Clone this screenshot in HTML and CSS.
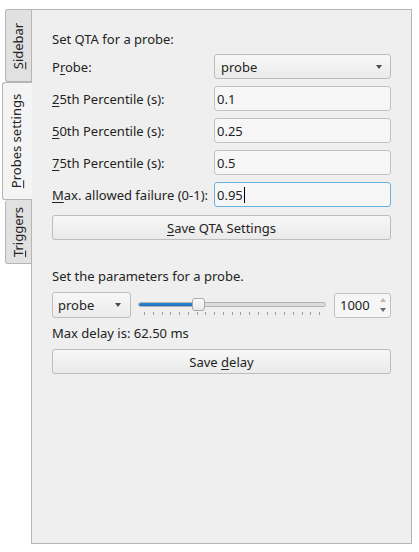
FILE: index.html
```html
<!DOCTYPE html>
<html>
<head>
<meta charset="utf-8">
<link rel="stylesheet" href="styles.css">
</head>
<body>
<div class="window">
  <div class="tabbar">
    <div class="tab tab-sidebar"><span class="tab-label"><u>S</u>idebar</span></div>
    <div class="tab tab-selected"><span class="tab-label"><u>P</u>robes settings</span></div>
    <div class="tab tab-triggers"><span class="tab-label"><u>T</u>riggers</span></div>
  </div>
  <div class="panel">
    <div class="title">Set QTA for a probe:</div>
    <div class="form">
      <label class="label">P<u>r</u>obe:</label>
      <div class="combo"><span>probe</span><span class="arrow"></span></div>
      <label class="label"><u>2</u>5th Percentile (s):</label>
      <div class="edit">0.1</div>
      <label class="label"><u>5</u>0th Percentile (s):</label>
      <div class="edit">0.25</div>
      <label class="label"><u>7</u>5th Percentile (s):</label>
      <div class="edit">0.5</div>
      <label class="label"><u>M</u>ax. allowed failure (0-1):</label>
      <div class="edit focused">0.95<span class="caret"></span></div>
    </div>
    <div class="button btn-qta"><span><u>S</u>ave QTA Settings</span></div>

    <div class="title title-2">Set the parameters for a probe.</div>
    <div class="param-row">
      <div class="combo combo-small"><span>probe</span><span class="arrow"></span></div>
      <div class="slider">
        <div class="track">
          <div class="groove"><div class="groove-fill"></div></div>
          <div class="handle"></div>
        </div>
        <div class="ticks">
          <i></i><i></i><i></i><i></i><i></i><i></i><i></i><i></i><i></i><i></i><i></i>
          <i></i><i></i><i></i><i></i><i></i><i></i><i></i><i></i><i></i><i></i>
        </div>
      </div>
      <div class="spin">
        <span>1000</span>
        <span class="spin-arrows"><span class="up"></span><span class="down"></span></span>
      </div>
    </div>
    <div class="info">Max delay is: 62.50 ms</div>
    <div class="button btn-delay"><span>Save <u>d</u>elay</span></div>
  </div>
</div>
</body>
</html>
```
FILE: styles.css
```css
html, body {
  margin: 0;
  padding: 0;
  background: #ffffff;
}
body {
  font-family: "Noto Sans", "Open Sans", sans-serif;
  font-size: 13px;
  color: #232323;
}
u {
  text-decoration: underline;
  text-underline-offset: 2px;
  text-decoration-thickness: 1px;
}
.window {
  display: flex;
  width: 419px;
  height: 552px;
  box-sizing: border-box;
  padding: 9px 7px 8px 0;
}
.tabbar {
  width: 31px;
  flex: none;
  display: flex;
  flex-direction: column;
  align-items: flex-end;
}
.tab {
  width: 26px;
  box-sizing: border-box;
  background: #e1e1e1;
  border: 1px solid #b5b5b5;
  border-right: none;
  border-radius: 3px 0 0 3px;
  display: flex;
  align-items: center;
  justify-content: center;
  overflow: visible;
}
.tab-sidebar { height: 73px; }
.tab-triggers { height: 64px; border-top: none; }
.tab-selected {
  width: 30px;
  height: 118px;
  margin-right: -1px;
  background: #f4f4f4;
  position: relative;
  z-index: 1;
  border-bottom: 1px solid #b5b5b5;
}
.tab-label {
  display: block;
  white-space: nowrap;
  transform: rotate(-90deg);
  line-height: 18px;
}
.tab-selected .tab-label { margin-left: -2px; }
.panel {
  flex: 1;
  background: #efefef;
  border: 1px solid #b5b5b5;
  padding: 20px 20px;
  display: flex;
  flex-direction: column;
}
.title {
  line-height: 18px;
  height: 18px;
  white-space: nowrap;
}
.form {
  margin-top: 6px;
  display: grid;
  grid-template-columns: 156px 1fr;
  column-gap: 6px;
  row-gap: 7px;
  grid-auto-rows: 25px;
  align-items: center;
}
.label {
  line-height: 18px;
  white-space: nowrap;
}
.combo {
  height: 25px;
  box-sizing: border-box;
  border: 1px solid #bdbdbd;
  border-radius: 3px;
  background: linear-gradient(#f7f7f7, #ebebeb);
  display: flex;
  align-items: center;
  justify-content: space-between;
  padding: 0 8px 0 6px;
}
.arrow {
  width: 0;
  height: 0;
  border-left: 3.5px solid transparent;
  border-right: 3.5px solid transparent;
  border-top: 4px solid #4a4a4a;
}
.edit {
  height: 25px;
  box-sizing: border-box;
  border: 1px solid #c2c2c2;
  border-radius: 3px;
  background: #f6f6f6;
  padding: 0 2px;
  display: flex;
  align-items: center;
}
.edit.focused {
  border-color: #68b3e6;
}
.caret {
  display: inline-block;
  width: 1px;
  height: 16px;
  background: #000;
  margin-left: 1px;
}
.button {
  height: 25px;
  box-sizing: border-box;
  border: 1px solid #bdbdbd;
  border-radius: 3px;
  background: linear-gradient(#f7f7f7, #eaeaea);
  display: flex;
  align-items: center;
  justify-content: center;
  white-space: nowrap;
}
.btn-qta { margin-top: 8px; }
.title-2 { margin-top: 27px; }
.param-row {
  margin-top: 7px;
  height: 26px;
  display: flex;
  align-items: center;
  gap: 7px;
}
.combo-small {
  width: 79px;
  height: 26px;
  flex: none;
  padding: 0 6px 0 5px;
}
.combo-small .arrow { margin-right: 3px; }
.slider {
  flex: 1;
  display: flex;
  flex-direction: column;
  margin-right: 1px;
  margin-top: 4px;
}
.track {
  position: relative;
  height: 13px;
  display: flex;
  align-items: center;
}
.groove {
  flex: 1;
  height: 5px;
  box-sizing: border-box;
  border: 1px solid #b3b3b3;
  border-radius: 3px;
  background: #dcdcdc;
  overflow: hidden;
  display: flex;
}
.groove-fill {
  width: 58px;
  background: linear-gradient(#2f8ad8, #1f6fbf);
}
.handle {
  position: absolute;
  left: 54px;
  top: 0;
  width: 13px;
  height: 13px;
  box-sizing: border-box;
  border: 1px solid #a9a9a9;
  border-radius: 3px;
  background: linear-gradient(#fbfbfb, #e8e8e8);
}
.ticks {
  margin-top: 1px;
  height: 4px;
  padding: 0 6px 0 6px;
  display: flex;
  justify-content: space-between;
}
.ticks i {
  display: block;
  width: 1px;
  height: 3px;
  background: #a0a0a0;
}
.spin {
  width: 57px;
  height: 25px;
  flex: none;
  box-sizing: border-box;
  border: 1px solid #c2c2c2;
  border-radius: 3px;
  background: #f6f6f6;
  display: flex;
  align-items: center;
  justify-content: space-between;
  padding: 0 4px 0 5px;
}
.spin-arrows {
  display: flex;
  flex-direction: column;
  gap: 6px;
  align-items: center;
}
.spin-arrows .up {
  width: 0;
  height: 0;
  border-left: 3px solid transparent;
  border-right: 3px solid transparent;
  border-bottom: 4px solid #b8b8b8;
}
.spin-arrows .down {
  width: 0;
  height: 0;
  border-left: 3px solid transparent;
  border-right: 3px solid transparent;
  border-top: 4px solid #6a6a6a;
}
.info {
  margin-top: 6px;
  line-height: 18px;
  white-space: nowrap;
}
.btn-delay { margin-top: 7px; }
```
